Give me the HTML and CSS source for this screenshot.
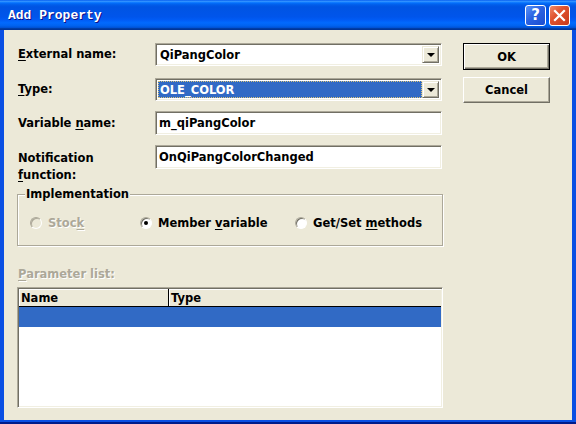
FILE: index.html
```html
<!DOCTYPE html>
<html>
<head>
<meta charset="utf-8">
<title>Add Property</title>
<link rel="stylesheet" href="styles.css">
</head>
<body>
<div class="window">
  <div class="titlebar">
    <span class="title">Add Property</span>
    <div class="tb-btns">
      <div class="tb-btn help">?</div>
      <div class="tb-btn close">
        <svg width="19" height="19" viewBox="0 0 19 19"><path d="M5 5 L14 14 M14 5 L5 14" stroke="#fff" stroke-width="2.2" stroke-linecap="square"/></svg>
      </div>
    </div>
  </div>
  <div class="client">
    <div class="top">
      <div class="form">
        <div class="row r1">
          <label class="lbl"><u>E</u>xternal name:</label>
          <div class="field combo"><span class="val">QiPangColor</span><span class="drop"><i class="arrow"></i></span></div>
        </div>
        <div class="row r2">
          <label class="lbl"><u>T</u>ype:</label>
          <div class="field combo"><span class="val"><span class="sel">OLE_COLOR</span></span><span class="drop"><i class="arrow"></i></span></div>
        </div>
        <div class="row r3">
          <label class="lbl">Variable <u>n</u>ame:</label>
          <div class="field edit">m_qiPangColor</div>
        </div>
        <div class="row r4">
          <label class="lbl multi">Notification<br><u>f</u>unction:</label>
          <div class="field edit">OnQiPangColorChanged</div>
        </div>
      </div>
      <div class="buttons">
        <div class="btn default"><span class="btn-in">OK</span></div>
        <div class="btn cancel"><span class="btn-in">Cancel</span></div>
      </div>
    </div>
    <fieldset class="group">
      <legend>Implementation</legend>
      <div class="radios">
        <div class="radio disabled stock"><span class="dot"></span><span class="rtext">Stoc<u>k</u></span></div>
        <div class="radio member"><span class="dot checked"></span><span class="rtext">Member <u>v</u>ariable</span></div>
        <div class="radio getset"><span class="dot"></span><span class="rtext">Get/Set <u>m</u>ethods</span></div>
      </div>
    </fieldset>
    <div class="plabel"><u>P</u>arameter list:</div>
    <div class="list">
      <div class="list-head">
        <div class="hcell name">Name</div>
        <div class="hcell type">Type</div>
      </div>
      <div class="list-row selected"></div>
    </div>
  </div>
</div>
</body>
</html>
```
FILE: styles.css
```css
* { box-sizing: border-box; }
html, body { margin: 0; padding: 0; }
body {
  width: 576px;
  height: 424px;
  overflow: hidden;
  font-family: "DejaVu Sans", "Liberation Sans", sans-serif;
  font-weight: bold;
  font-size: 11.5px;
  color: #000;
  background: #fff;
}
u { text-decoration: underline; text-underline-offset: 2px; }

.window {
  width: 576px;
  height: 424px;
  display: flex;
  flex-direction: column;
  background: #0A4FE3;
  border-bottom: 2px solid #001B8A;
}

.titlebar {
  height: 30px;
  flex: none;
  display: flex;
  align-items: center;
  justify-content: space-between;
  padding: 0 6px 0 8px;
  background: linear-gradient(to bottom, #0058EE 0%, #3593FF 4%, #288EFF 6%, #127DFF 8%, #036FFC 10%, #0262EE 14%, #0057E5 20%, #0054E3 24%, #0055EB 56%, #005BF5 66%, #026AFE 76%, #0062EF 86%, #0052D6 92%, #0040AB 94%, #003092 100%);
}
.title {
  font-family: "Liberation Mono", monospace;
  font-size: 13px;
  font-weight: bold;
  color: #fff;
  text-shadow: 1px 1px #0F1089;
}
.tb-btns { display: flex; gap: 3px; }
.tb-btn {
  width: 21px;
  height: 21px;
  border: 1px solid #fff;
  border-radius: 3px;
  display: flex;
  align-items: center;
  justify-content: center;
  color: #fff;
}
.help {
  background: linear-gradient(135deg, #5A93F8 0%, #2A62E2 45%, #1B4DD0 100%);
  font-family: "DejaVu Sans", sans-serif;
  font-size: 15px;
  font-weight: bold;
}
.close {
  background: linear-gradient(135deg, #F08A6A 0%, #E0532F 40%, #C8391A 100%);
}

.client {
  flex: 1;
  margin: 0 4px 2px 4px;
  background: #ECE9D8;
  padding: 13px 0 0 13px;
  display: flex;
  flex-direction: column;
}

.top { display: flex; align-items: flex-start; }
.form { width: 425px; flex: none; }
.row { display: flex; align-items: center; }
.lbl { width: 138px; flex: none; padding-left: 1px; line-height: 17px; }
.r1 { height: 23px; margin-bottom: 12px; }
.r2 { height: 23px; margin-bottom: 10px; }
.r3 { height: 24px; margin-bottom: 10px; }
.r4 { height: 24px; align-items: flex-start; }
.r4 .lbl { padding-top: 5px; }

.field {
  width: 287px;
  height: 100%;
  background: #fff;
  border: 1px solid;
  border-color: #ACA899 #fff #fff #ACA899;
  box-shadow: inset 1px 1px #716F64, inset -1px -1px #F1EFE2;
  padding: 2px;
}
.edit {
  display: flex;
  align-items: center;
  padding-left: 3px;
}
.combo { display: flex; }
.val {
  flex: 1;
  display: flex;
  align-items: center;
  padding-left: 2px;
}
.r2 .val { padding: 0; }
.sel {
  flex: 1;
  align-self: stretch;
  display: flex;
  align-items: center;
  padding-left: 2px;
  background: #316AC5;
  color: #fff;
  outline: 1px dotted #D8C37A;
  outline-offset: -1px;
}
.drop {
  width: 17px;
  flex: none;
  background: #ECE9D8;
  border: 1px solid;
  border-color: #ECE9D8 #716F64 #716F64 #ECE9D8;
  box-shadow: inset 1px 1px #fff, inset -1px -1px #ACA899;
  display: flex;
  align-items: center;
  justify-content: center;
}
.arrow {
  width: 0;
  height: 0;
  border-left: 4px solid transparent;
  border-right: 4px solid transparent;
  border-top: 4px solid #000;
  margin-top: 1px;
}

.buttons {
  margin-left: 21px;
  width: 87px;
  display: flex;
  flex-direction: column;
  gap: 7px;
}
.btn {
  height: 26px;
  background: #ECE9D8;
  border: 1px solid;
  border-color: #fff #716F64 #716F64 #fff;
  box-shadow: inset -1px -1px #ACA899;
  display: flex;
  align-items: center;
  justify-content: center;
}
.btn.default {
  height: 27px;
  border: 1px solid #000;
  box-shadow: inset 1px 1px #fff, inset -1px -1px #716F64, inset -2px -2px #ACA899;
}

.group {
  margin: 18px 0 0 0;
  width: 426px;
  padding: 0 0 14px 0;
  border: 1px solid #ACA899;
  box-shadow: inset 1px 1px #fff, 1px 1px #fff;
  min-inline-size: 0;
}
.group legend {
  margin-left: 7px;
  padding: 0 1px;
  line-height: 15px;
  background: #ECE9D8;
}
.radios {
  display: flex;
  align-items: center;
  height: 16px;
  margin-top: 13px;
  padding-left: 12px;
}
.radio { display: flex; align-items: center; gap: 6px; }
.stock { width: 110px; }
.member { width: 155px; }
.dot {
  width: 12px;
  height: 12px;
  border-radius: 50%;
  background: #fff;
  border: 1px solid;
  border-color: #ACA899 #fff #fff #ACA899;
  box-shadow: inset 1px 1px #716F64;
  display: flex;
  align-items: center;
  justify-content: center;
}
.dot.checked::after {
  content: "";
  width: 4px;
  height: 4px;
  border-radius: 50%;
  background: #000;
}
.disabled .dot { background: #ECE9D8; box-shadow: inset 1px 1px #ACA899; }
.disabled .rtext, .plabel {
  color: #ACA899;
  text-shadow: 1px 1px #fff;
}

.plabel {
  margin-top: 21px;
  padding-left: 1px;
  line-height: 15px;
}

.list {
  margin-top: 5px;
  width: 426px;
  height: 121px;
  background: #fff;
  border: 1px solid;
  border-color: #ACA899 #fff #fff #ACA899;
  box-shadow: inset 1px 1px #716F64, inset -1px -1px #F1EFE2;
  padding: 1px;
}
.list-head {
  display: flex;
  height: 18px;
  background: #ECE9D8;
  border-bottom: 1px solid #000;
}
.hcell {
  display: flex;
  align-items: center;
  padding-left: 2px;
  box-shadow: inset 1px 1px #fff;
}
.hcell.name { width: 150px; border-right: 1px solid #000; }
.hcell.type { flex: 1; }
.list-row.selected {
  height: 20px;
  background: #316AC5;
}
```
